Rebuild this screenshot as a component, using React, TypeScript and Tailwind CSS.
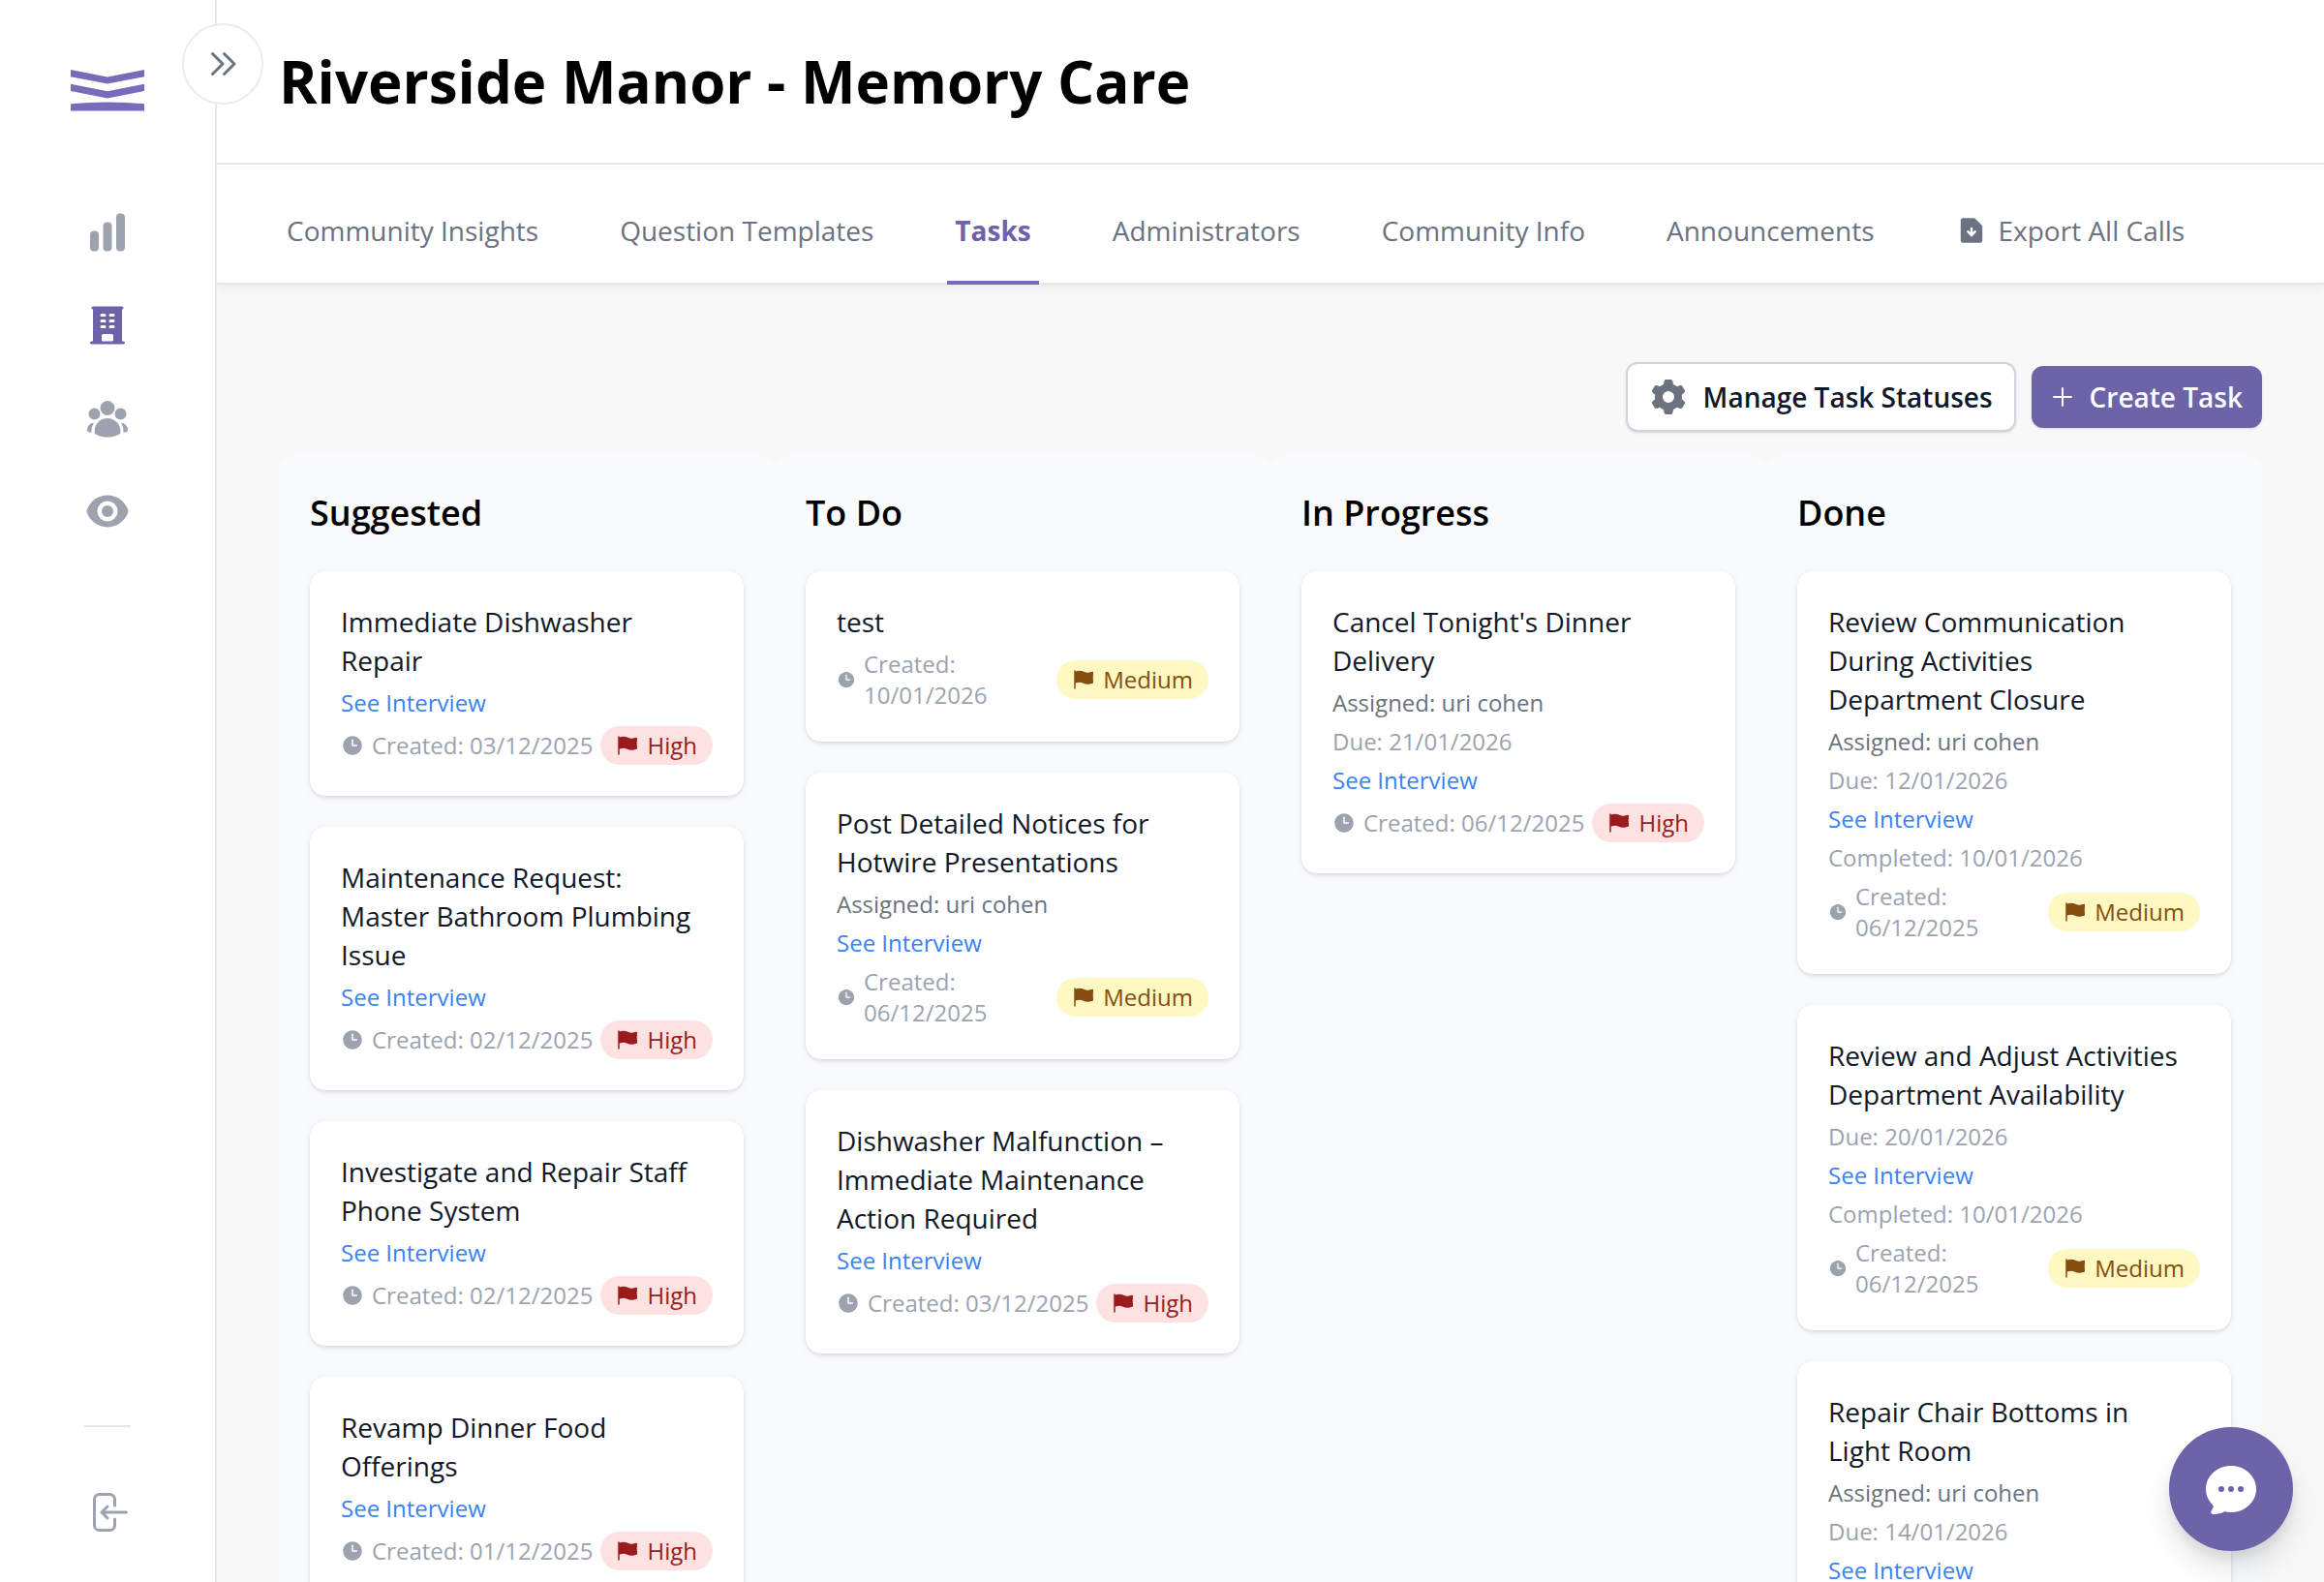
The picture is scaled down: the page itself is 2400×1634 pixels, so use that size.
import type { ReactNode } from "react";
import {
  HiBuildingOffice,
  HiChartBar,
  HiChatBubbleOvalLeftEllipsis,
  HiClock,
  HiEye,
  HiFlag,
  HiUserGroup,
} from "react-icons/hi2";
import { HiOutlineChevronDoubleRight } from "react-icons/hi";

type Priority = "High" | "Medium";

interface Task {
  title: string;
  assigned?: string;
  due?: string;
  interview?: boolean;
  completed?: string;
  created: string;
  priority: Priority;
}

interface Column {
  name: string;
  tasks: Task[];
}

const COLUMNS: Column[] = [
  {
    name: "Suggested",
    tasks: [
      { title: "Immediate Dishwasher Repair", interview: true, created: "03/12/2025", priority: "High" },
      {
        title: "Maintenance Request: Master Bathroom Plumbing Issue",
        interview: true,
        created: "02/12/2025",
        priority: "High",
      },
      {
        title: "Investigate and Repair Staff Phone System",
        interview: true,
        created: "02/12/2025",
        priority: "High",
      },
      { title: "Revamp Dinner Food Offerings", interview: true, created: "01/12/2025", priority: "High" },
    ],
  },
  {
    name: "To Do",
    tasks: [
      { title: "test", created: "10/01/2026", priority: "Medium" },
      {
        title: "Post Detailed Notices for Hotwire Presentations",
        assigned: "uri cohen",
        interview: true,
        created: "06/12/2025",
        priority: "Medium",
      },
      {
        title: "Dishwasher Malfunction – Immediate Maintenance Action Required",
        interview: true,
        created: "03/12/2025",
        priority: "High",
      },
    ],
  },
  {
    name: "In Progress",
    tasks: [
      {
        title: "Cancel Tonight's Dinner Delivery",
        assigned: "uri cohen",
        due: "21/01/2026",
        interview: true,
        created: "06/12/2025",
        priority: "High",
      },
    ],
  },
  {
    name: "Done",
    tasks: [
      {
        title: "Review Communication During Activities Department Closure",
        assigned: "uri cohen",
        due: "12/01/2026",
        interview: true,
        completed: "10/01/2026",
        created: "06/12/2025",
        priority: "Medium",
      },
      {
        title: "Review and Adjust Activities Department Availability",
        due: "20/01/2026",
        interview: true,
        completed: "10/01/2026",
        created: "06/12/2025",
        priority: "Medium",
      },
      {
        title: "Repair Chair Bottoms in Light Room",
        assigned: "uri cohen",
        due: "14/01/2026",
        interview: true,
        completed: "10/01/2026",
        created: "06/12/2025",
        priority: "Medium",
      },
    ],
  },
];

const TABS = [
  "Community Insights",
  "Question Templates",
  "Tasks",
  "Administrators",
  "Community Info",
  "Announcements",
];

function Logo() {
  return (
    <svg viewBox="0 0 76 44" className="h-11 w-[76px]" fill="#776cb9" aria-hidden="true">
      <path d="M0 0 38 7.500 76 0V7.200L38 14.600 0 7.200Z" />
      <path d="M0 14.800 38 22.200 76 14.800V22L38 29.400 0 22Z" />
      <path d="M0 35.200Q38 31.600 76 35.200V42.500H0Z" />
    </svg>
  );
}

function CogIcon() {
  return (
    <svg viewBox="0 0 20 20" className="size-10 text-[#6b7280]" fill="currentColor" aria-hidden="true">
      <path
        fillRule="evenodd"
        clipRule="evenodd"
        d="M7.840 1.804A1 1 0 0 1 8.820 1h2.360a1 1 0 0 1 .98.804l.331 1.652a6.993 6.993 0 0 1 1.929 1.115l1.598-.54a1 1 0 0 1 1.186.447l1.180 2.044a1 1 0 0 1-.205 1.251l-1.267 1.113a7.047 7.047 0 0 1 0 2.228l1.267 1.113a1 1 0 0 1 .206 1.250l-1.180 2.045a1 1 0 0 1-1.187.447l-1.598-.54a6.993 6.993 0 0 1-1.929 1.115l-.33 1.652a1 1 0 0 1-.98.804H8.820a1 1 0 0 1-.98-.804l-.331-1.652a6.993 6.993 0 0 1-1.929-1.115l-1.598.54a1 1 0 0 1-1.186-.447l-1.180-2.044a1 1 0 0 1 .205-1.251l1.267-1.114a7.050 7.050 0 0 1 0-2.227L1.821 7.773a1 1 0 0 1-.206-1.250l1.180-2.045a1 1 0 0 1 1.187-.447l1.598.54A6.993 6.993 0 0 1 7.510 3.456l.33-1.652ZM10 13a3 3 0 1 0 0-6 3 3 0 0 0 0 6Z"
      />
    </svg>
  );
}

function DownloadIcon() {
  return (
    <svg viewBox="0 0 20 20" className="size-8" fill="currentColor" aria-hidden="true">
      <path
        fillRule="evenodd"
        clipRule="evenodd"
        d="M4.500 2A1.500 1.500 0 0 0 3 3.500v13A1.500 1.500 0 0 0 4.500 18h11a1.500 1.500 0 0 0 1.500-1.500V7.621a1.500 1.500 0 0 0-.44-1.060l-4.120-4.122A1.500 1.500 0 0 0 11.378 2H4.500Zm4.750 6.750a.75.75 0 0 1 1.500 0v2.546l.943-1.048a.75.75 0 0 1 1.114 1.004l-2.250 2.500a.75.75 0 0 1-1.114 0l-2.250-2.500a.75.75 0 1 1 1.114-1.004l.943 1.048V8.750Z"
      />
    </svg>
  );
}

function LogoutIcon() {
  return (
    <svg
      viewBox="0 0 48 48"
      className="size-12"
      fill="none"
      stroke="currentColor"
      strokeWidth="3"
      strokeLinecap="round"
      strokeLinejoin="round"
      aria-hidden="true"
    >
      <path d="M31.500 17V10.500a5 5 0 0 0-5-5h-11a5 5 0 0 0-5 5v27a5 5 0 0 0 5 5h11a5 5 0 0 0 5-5V31M24 18l-6 6 6 6M18.500 24h25" />
    </svg>
  );
}

function SidebarLink({ label, active, children }: { label: string; active?: boolean; children: ReactNode }) {
  return (
    <a href="#" aria-label={label} className={active ? "text-[#6c63a8]" : "text-[#9ca3af]"}>
      {children}
    </a>
  );
}

function Sidebar() {
  return (
    <aside className="relative flex w-56 shrink-0 flex-col items-center border-r-2 border-[#e5e7eb] bg-white pt-[72px] pb-12">
      <Logo />
      <nav className="mt-[100px] flex flex-col gap-12">
        <SidebarLink label="Insights">
          <HiChartBar className="size-12" />
        </SidebarLink>
        <SidebarLink label="Communities" active>
          <HiBuildingOffice className="size-12" />
        </SidebarLink>
        <SidebarLink label="Users">
          <HiUserGroup className="size-12" />
        </SidebarLink>
        <SidebarLink label="Overview">
          <HiEye className="size-12" />
        </SidebarLink>
      </nav>
      <hr className="mt-auto mb-16 w-12 border-t-2 border-[#e5e7eb]" />
      <button type="button" aria-label="Log out" className="text-[#9ca3af]">
        <LogoutIcon />
      </button>
      <button
        type="button"
        aria-label="Expand sidebar"
        className="absolute top-6 -right-[50px] flex size-21 items-center justify-center rounded-full border-2 border-[#ececec] bg-white text-[#6b7280]"
      >
        <HiOutlineChevronDoubleRight className="size-9" />
      </button>
    </aside>
  );
}

function Tab({ label }: { label: string }) {
  const active = label === "Tasks";
  return (
    <a
      href="#"
      className={`-mb-0.5 border-b-4 px-2 pt-4 ${
        active ? "border-[#776cb9] font-bold text-[#6c63a8]" : "border-transparent"
      }`}
    >
      {label}
    </a>
  );
}

function PriorityBadge({ priority }: { priority: Priority }) {
  return (
    <span
      className={`flex shrink-0 items-center gap-2 rounded-full px-4 py-1 font-medium ${
        priority === "High" ? "bg-[#fee2e2] text-[#991b1b]" : "bg-[#fef9c3] text-[#854d0e]"
      }`}
    >
      <HiFlag className="size-6" />
      {priority}
    </span>
  );
}

function TaskCard({ task }: { task: Task }) {
  // the wide "Medium" badge leaves too little room for a one-line date
  const wrapDate = task.priority === "Medium";
  return (
    <article className="flex flex-col rounded-2xl bg-white p-8 text-2xl leading-8 text-[#9ca3af] shadow-[0_2px_6px_rgba(0,0,0,0.1),0_2px_4px_-2px_rgba(0,0,0,0.1)]">
      <h3 className="mb-1 pr-2 text-[28px] leading-10 font-medium text-[#111827]">{task.title}</h3>
      {task.assigned && <p className="leading-10 text-[#6b7280]">Assigned: {task.assigned}</p>}
      {task.due && <p className="leading-10">Due: {task.due}</p>}
      {task.interview && (
        <a href="#" className="self-start leading-10 text-[#3b82f6]">
          See Interview
        </a>
      )}
      {task.completed && <p className="leading-10">Completed: {task.completed}</p>}
      <div className="mt-1 flex items-center justify-between">
        <p className="flex items-center gap-2">
          <HiClock className={wrapDate ? "size-5 shrink-0" : "size-6 shrink-0"} />
          <span className={wrapDate ? "w-min" : "whitespace-nowrap"}>Created: {task.created}</span>
        </p>
        <PriorityBadge priority={task.priority} />
      </div>
    </article>
  );
}

export default function App() {
  return (
    <div className="flex h-screen overflow-hidden bg-[#f8f8f8] font-['Open_Sans',sans-serif] text-black">
      <Sidebar />
      <div className="flex min-w-0 flex-1 flex-col">
        <header className="border-b-2 border-[#e5e7eb] bg-white px-16 py-12">
          <h1 className="text-[60px] leading-[72px] font-bold">Riverside Manor - Memory Care</h1>
        </header>
        <nav className="flex gap-17 border-b-2 border-[#e5e7eb] bg-white px-16 text-[28px] leading-[104px] font-medium text-[#6b7280] shadow-[0_4px_8px_rgba(0,0,0,0.05)]">
          {TABS.map((label) => (
            <Tab key={label} label={label} />
          ))}
          <a href="#" className="-mb-0.5 flex items-center gap-3 border-b-4 border-transparent px-2 pt-4">
            <DownloadIcon />
            Export All Calls
          </a>
        </nav>

        <main className="flex min-h-0 flex-1 flex-col px-16 pt-20">
          <div className="flex items-center justify-end gap-4">
            <button
              type="button"
              className="flex h-18 items-center gap-4 rounded-xl border-2 border-[#d1d5db] bg-white px-[22px] text-[28px] font-semibold text-[#111827] shadow-sm"
            >
              <CogIcon />
              Manage Task Statuses
            </button>
            <button
              type="button"
              className="flex h-16 items-center gap-4 rounded-xl bg-[#6c63a8] px-5 text-[28px] font-semibold text-white shadow-sm"
            >
              <svg viewBox="0 0 24 24" className="size-6" stroke="currentColor" strokeWidth="2" strokeLinecap="round">
                <path d="M12 3v18M3 12h18" />
              </svg>
              Create Task
            </button>
          </div>

          <div className="mt-6 grid min-h-0 flex-1 grid-cols-4">
            {COLUMNS.map((column) => (
              <section key={column.name} className="rounded-t-2xl bg-[#f9fafc] p-8">
                <h2 className="mb-8 text-4xl leading-[56px] font-semibold">{column.name}</h2>
                <div className="flex flex-col gap-8">
                  {column.tasks.map((task) => (
                    <TaskCard key={task.title} task={task} />
                  ))}
                </div>
              </section>
            ))}
          </div>
        </main>
      </div>

      <button
        type="button"
        aria-label="Open chat"
        className="fixed right-8 bottom-8 flex size-32 items-center justify-center rounded-full bg-[#6c63a8] text-white shadow-[0_20px_30px_rgba(0,0,0,0.1),0_8px_12px_rgba(0,0,0,0.08)]"
      >
        <HiChatBubbleOvalLeftEllipsis className="size-16" />
      </button>
    </div>
  );
}
